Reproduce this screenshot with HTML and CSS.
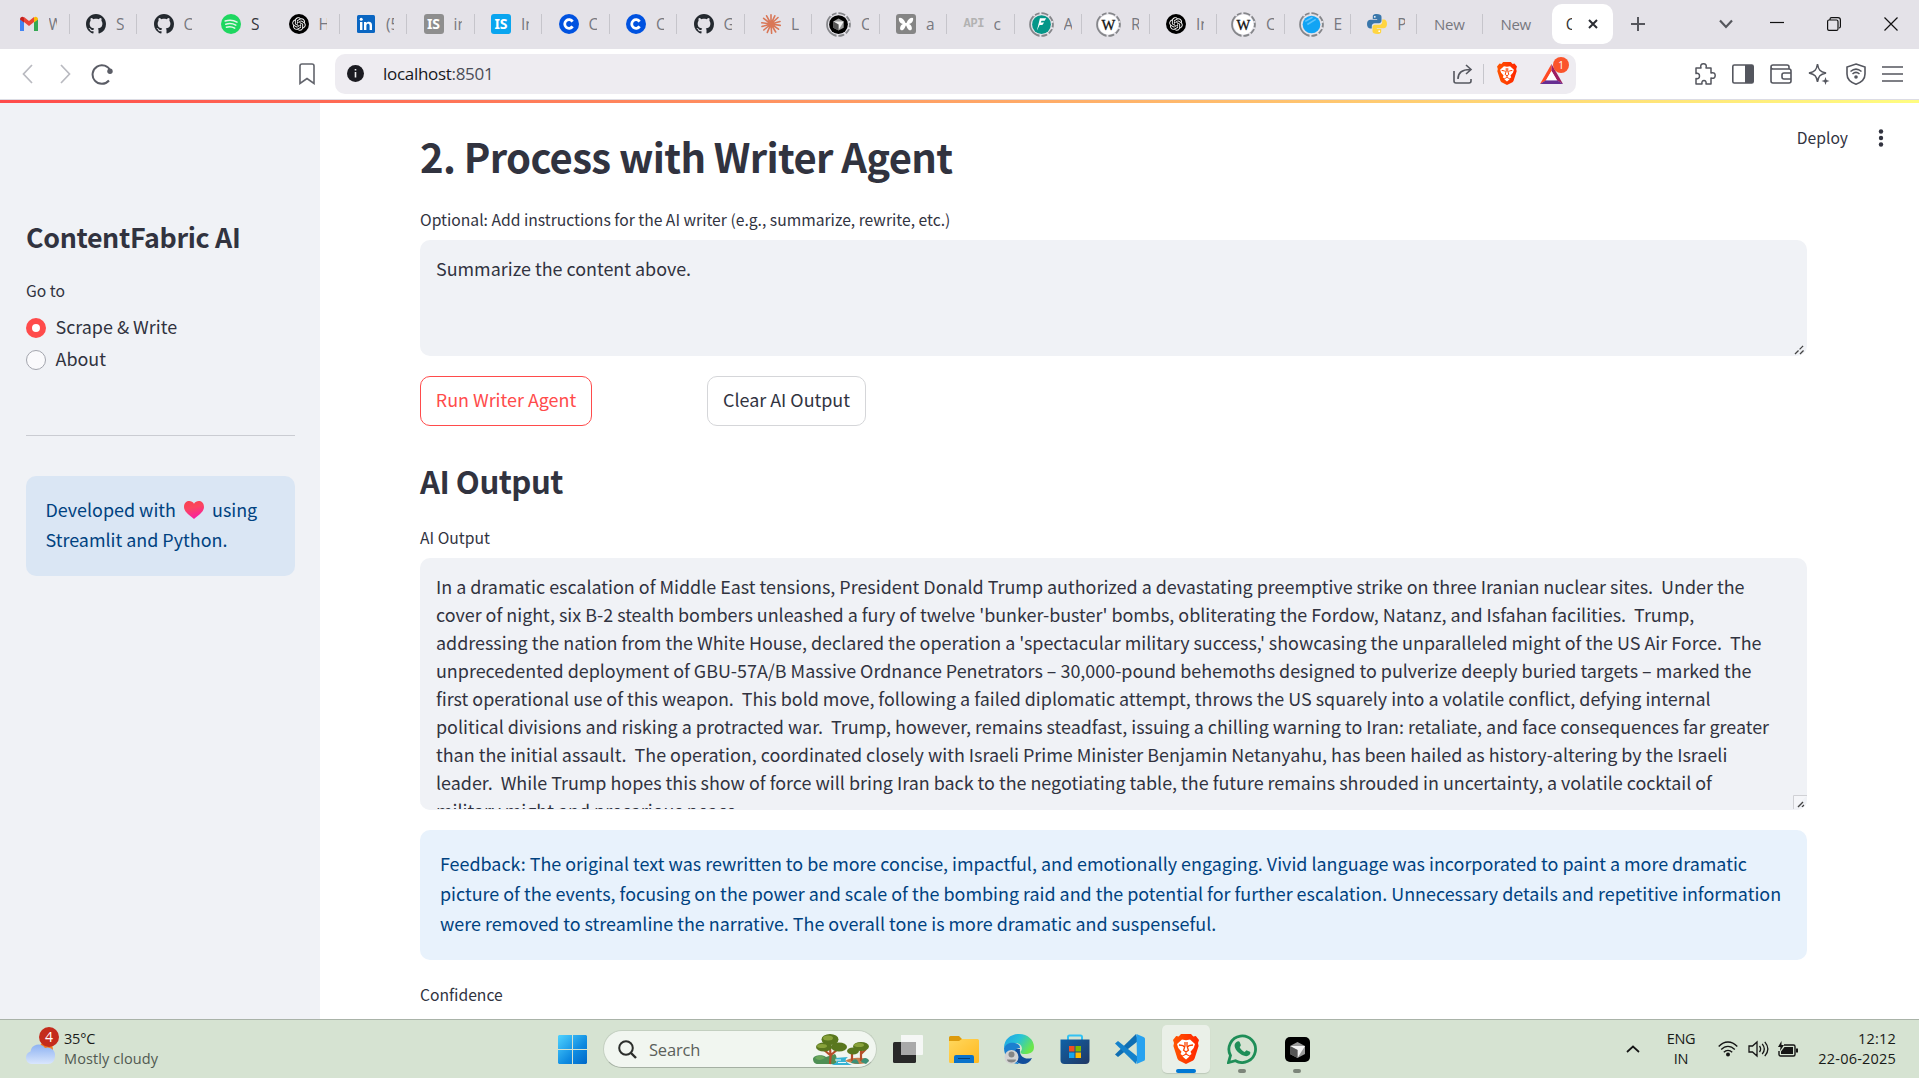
FILE: index.html
```html
<!DOCTYPE html>
<html lang="en">
<head>
<meta charset="utf-8">
<title>ContentFabric AI</title>
<link rel="stylesheet" href="styles.css">
</head>
<body>
<svg class="defs" aria-hidden="true">
  <defs>
    <linearGradient id="winG" x1="0" y1="0" x2="1" y2="1"><stop offset="0" stop-color="#4fd3ff"/><stop offset=".6" stop-color="#0e8ae0"/><stop offset="1" stop-color="#0067c8"/></linearGradient>
    <linearGradient id="cloudG" x1="0" y1="0" x2="0" y2="1"><stop offset="0" stop-color="#8db2f2"/><stop offset="1" stop-color="#d9e6fd"/></linearGradient>
    <linearGradient id="heartG" x1="0" y1="0" x2=".3" y2="1"><stop offset="0" stop-color="#f9414e"/><stop offset=".45" stop-color="#fb4660"/><stop offset="1" stop-color="#f9209f"/></linearGradient>
    <linearGradient id="braveG" x1="0" y1="0" x2="1" y2="0"><stop offset="0" stop-color="#ff5601"/><stop offset="1" stop-color="#ff2500"/></linearGradient>
    <linearGradient id="folderG" x1="0" y1="0" x2="1" y2="1"><stop offset="0" stop-color="#ffd75e"/><stop offset="1" stop-color="#ffb91f"/></linearGradient>
    <linearGradient id="edgeG" x1="0" y1="0" x2="1" y2=".5"><stop offset="0" stop-color="#1f9fe8"/><stop offset=".5" stop-color="#27c3d8"/><stop offset="1" stop-color="#6be64c"/></linearGradient>
    <linearGradient id="storeG" x1="0" y1="0" x2="1" y2="1"><stop offset="0" stop-color="#0f62a8"/><stop offset="1" stop-color="#213864"/></linearGradient>
    <symbol id="github" viewBox="0 0 16 16"><path fill="#24292f" d="M8 0C3.58 0 0 3.58 0 8c0 3.54 2.29 6.53 5.47 7.59.4.07.55-.17.55-.38 0-.19-.01-.82-.01-1.49-2.01.37-2.53-.49-2.69-.94-.09-.23-.48-.94-.82-1.13-.28-.15-.68-.52-.01-.53.63-.01 1.08.58 1.23.82.72 1.21 1.87.87 2.33.66.07-.52.28-.87.51-1.07-1.78-.2-3.64-.89-3.64-3.95 0-.87.31-1.59.82-2.15-.08-.2-.36-1.02.08-2.12 0 0 .67-.21 2.2.82.64-.18 1.32-.27 2-.27s1.36.09 2 .27c1.53-1.04 2.2-.82 2.2-.82.44 1.1.16 1.92.08 2.12.51.56.82 1.27.82 2.15 0 3.07-1.87 3.75-3.65 3.95.29.25.54.73.54 1.48 0 1.07-.01 1.93-.01 2.2 0 .21.15.46.55.38A8.01 8.01 0 0 0 16 8c0-4.42-3.58-8-8-8z"/></symbol>
    <symbol id="openai" viewBox="0 0 40 40"><circle cx="20" cy="20" r="20"/><path fill="#fff" transform="translate(6.500 6.500) scale(1.125)" d="M22.2819 9.8211a5.9847 5.9847 0 0 0-.5157-4.9108 6.0462 6.0462 0 0 0-6.5098-2.9A6.0651 6.0651 0 0 0 4.9807 4.1818a5.9847 5.9847 0 0 0-3.9977 2.9 6.0462 6.0462 0 0 0 .7427 7.0966 5.98 5.98 0 0 0 .511 4.9107 6.051 6.051 0 0 0 6.5146 2.9001A5.9847 5.9847 0 0 0 13.2599 24a6.0557 6.0557 0 0 0 5.7718-4.2058 5.9894 5.9894 0 0 0 3.9977-2.9001 6.0557 6.0557 0 0 0-.7475-7.0729zm-9.022 12.6081a4.4755 4.4755 0 0 1-2.8764-1.0408l.1419-.0804 4.7783-2.7582a.7948.7948 0 0 0 .3927-.6813v-6.7369l2.02 1.1686a.071.071 0 0 1 .038.052v5.5826a4.504 4.504 0 0 1-4.4945 4.4944zm-9.6607-4.1254a4.4708 4.4708 0 0 1-.5346-3.0137l.142.0852 4.783 2.7582a.7712.7712 0 0 0 .7806 0l5.8428-3.3685v2.3324a.0804.0804 0 0 1-.0332.0615L9.74 19.9502a4.4992 4.4992 0 0 1-6.1408-1.6464zM2.3408 7.8956a4.485 4.485 0 0 1 2.3655-1.9728V11.6a.7664.7664 0 0 0 .3879.6765l5.8144 3.3543-2.0201 1.1685a.0757.0757 0 0 1-.071 0l-4.8303-2.7865A4.504 4.504 0 0 1 2.3408 7.872zm16.5963 3.8558L13.1038 8.364 15.1192 7.2a.0757.0757 0 0 1 .071 0l4.8303 2.7913a4.4944 4.4944 0 0 1-.6765 8.1042v-5.6772a.79.79 0 0 0-.407-.667zm2.0107-3.0231l-.142-.0852-4.7735-2.7818a.7759.7759 0 0 0-.7854 0L9.409 9.2297V6.8974a.0662.0662 0 0 1 .0284-.0615l4.8303-2.7866a4.4992 4.4992 0 0 1 6.6802 4.66zM8.3065 12.863l-2.02-1.1638a.0804.0804 0 0 1-.038-.0567V6.0742a4.4992 4.4992 0 0 1 7.3757-3.4537l-.142.0805L8.704 5.459a.7948.7948 0 0 0-.3927.6813zm1.0976-2.3654l2.602-1.4998 2.6069 1.4998v2.9994l-2.5974 1.4997-2.6067-1.4997Z"/></symbol>
    <symbol id="coin" viewBox="0 0 20 20"><circle cx="10" cy="10" r="10" fill="#0052e0"/><path d="M13.6 7.6A4.3 4.3 0 1 0 13.6 12.4" fill="none" stroke="#fff" stroke-width="2.800"/></symbol>
    <symbol id="brave" viewBox="0 0 26 30"><path fill="url(#braveG)" d="M8 0h10l2.300 2.500 2.500-.4L26 6l-1 3 .6 3-4 12.500a4 4 0 0 1-1.500 2L13 30l-7.100-3.500a4 4 0 0 1-1.500-2L.4 12 1 9 0 6l3.200-3.900 2.500.4z"/><path fill="#fff" d="M9 5.500l4 .8 4-.8 5 4.500-1.300 4-3.200 3.700 1 2.300-2 1.500-2.500-1.500-1-.3-1 .3-2.500 1.500-2-1.500 1-2.300L5.300 14 4 10zM9.500 22.500L13 20.700l3.500 1.800L13 25.500z"/><path fill="none" stroke="#fb4300" stroke-width="1.300" d="M6 11l4 .7 1 1M20 11l-4 .7-1 1M12 8v4l-1.400 4.200L13 18l2.400-1.800L14 12V8M13 18v2"/></symbol>
    <symbol id="ring" viewBox="0 0 24 24"><circle cx="12" cy="12" r="11" fill="none" stroke="#85868a" stroke-width="1.700"/><path stroke="#e4e2e8" stroke-width="1.800" d="M11 2.800V0M18 5l1.800-2.500M20.500 10l3-.8M20.500 15l3 1M17 19.500l2 2.500M11 21v3M5.500 4L4 2"/></symbol>
    <symbol id="wikipedia" viewBox="0 0 24 24"><circle cx="12" cy="12" r="9.500" fill="#fff"/><text x="12" y="17" text-anchor="middle" font-family="Liberation Serif" font-size="14" fill="#111" stroke="#111" stroke-width=".3">W</text></symbol>
  </defs>
</svg>

<header class="tabstrip">
  <div class="tab"><svg class="fav" viewBox="0 0 20 20"><path fill="#4285f4" d="M1 17V5l4 3v9z"/><path fill="#34a853" d="M15 17V8l4-3v12z"/><path fill="#ea4335" d="M5 8V3l5 4 5-4v5l-5 4z"/><path fill="#c5221f" d="M1 5.500C1 3 3.500 2 5 3.500v5L1 5.500z"/><path fill="#fbbc04" d="M19 5.500C19 3 16.500 2 15 3.500v5l4-3z"/></svg><span>W</span></div>
  <div class="tab"><svg class="fav"><use href="#github"/></svg><span>S</span></div>
  <div class="tab plain"><svg class="fav"><use href="#github"/></svg><span>C</span></div>
  <div class="tab plain dark"><svg class="fav" viewBox="0 0 20 20"><circle cx="10" cy="10" r="10" fill="#1ed760"/><path d="M4.200 7c4-1.200 8.500-.8 11.800 1.200M4.800 10.200c3.500-1 7.200-.6 10 1M5.400 13.200c3-.7 6-.4 8.300 1" fill="none" stroke="#e4f5ea" stroke-width="1.500" stroke-linecap="round"/></svg><span>S</span></div>
  <div class="tab"><svg class="fav"><use href="#openai"/></svg><span>H</span></div>
  <div class="tab"><svg class="fav" viewBox="0 0 20 20"><rect x="1" y="1" width="18" height="18" rx="1.500" fill="#0a66c2"/><path fill="#fff" d="M4 8h2.400v8H4zM8 8h2.300v1.200C11.500 7.200 16 7.200 16 11v5h-2.400v-4.500c0-2.300-3.200-2.100-3.200 0V16H8z"/><circle cx="5.200" cy="5.300" r="1.500" fill="#fff"/></svg><span>(5</span></div>
  <div class="tab"><i class="fav is gray">IS</i><span>in</span></div>
  <div class="tab"><i class="fav is">IS</i><span>In</span></div>
  <div class="tab"><svg class="fav"><use href="#coin"/></svg><span>C</span></div>
  <div class="tab"><svg class="fav"><use href="#coin"/></svg><span>C</span></div>
  <div class="tab"><svg class="fav"><use href="#github"/></svg><span>G</span></div>
  <div class="tab"><svg class="fav" viewBox="0 0 20 20"><path stroke="#d97757" stroke-width="1.600" stroke-linecap="round" d="M10 10V.8M10 10l3.800-8.200M10 10l7-6.500M10 10l9-2.500M10 10l9.300 1.400M10 10l7.500 5.200M10 10l4.700 8M10 10l.6 9.300M10 10l-3.700 8.400M10 10l-7.200 6M10 10l-9 2.500M10 10L.8 8.700M10 10L2.600 4.300M10 10L5.600 1.800"/></svg><span>L</span></div>
  <div class="tab"><svg class="fav big" viewBox="0 0 24 24"><use href="#ring"/><circle cx="12" cy="12" r="9"/><path fill="#999" d="M7 9l5-2.800L17 9v6l-5 2.800L7 15z"/><path fill="#eee" d="M7 9h10l-5 8.500V12z"/><path fill="#555" d="M7 9l5 3v5.500L7 15z"/></svg><span>C</span></div>
  <div class="tab"><svg class="fav" viewBox="0 0 20 20"><rect width="20" height="20" rx="3" fill="#858585"/><path fill="#fff" d="M9.500 9C8 4 3 2.500 2.800 4.500 2.700 8 5 9.500 7 10c-3 1-4 6-1.500 6.300C8 16.500 9 13 10 11.200c1 1.800 2 5.300 4.500 5.100C17 16 16 11 13 10c2-.5 4.300-2 4.200-5.500C17 2.500 12 4 10.500 9z"/></svg><span>a</span></div>
  <div class="tab"><i class="fav api">API</i><span>c</span></div>
  <div class="tab"><svg class="fav big" viewBox="0 0 24 24"><use href="#ring"/><circle cx="12" cy="12" r="9" fill="#059688"/><path fill="#fff" d="M10.500 6h6l-1.500 2.500h-3L11.300 10h3.200l-1.700 2.500h-2.600L7.500 18z"/></svg><span>A</span></div>
  <div class="tab"><svg class="fav big" viewBox="0 0 24 24"><use href="#ring"/><use href="#wikipedia"/></svg><span>R</span></div>
  <div class="tab"><svg class="fav"><use href="#openai"/></svg><span>In</span></div>
  <div class="tab"><svg class="fav big" viewBox="0 0 24 24"><use href="#ring"/><use href="#wikipedia"/></svg><span>C</span></div>
  <div class="tab narrow"><svg class="fav big" viewBox="0 0 24 24"><use href="#ring"/><circle cx="12" cy="12" r="8.500" fill="#12a4f4"/><path d="M6 9l7-4M8 12l8-5" stroke="#5dc3fb" stroke-width="1.500"/></svg><span>E</span></div>
  <div class="tab narrow"><svg class="fav" viewBox="0 0 20 20"><path fill="#3a77ab" d="M9.800 0C6 0 5.800 1.500 5.800 2.700V5h4.400v.8H3.500C1.500 5.800 0 7.200 0 10s1.300 4.400 3 4.400h1.800v-2.300c0-1.600 1.400-2.900 3-2.900h4.300c1.300 0 2.400-1 2.400-2.400V2.700C14.500.8 12.500 0 9.800 0z"/><path fill="#ffd541" d="M10.200 20c3.800 0 4-1.500 4-2.700V15H9.800v-.8h6.700c2 0 3.500-1.400 3.500-4.200s-1.300-4.400-3-4.400h-1.800v2.300c0 1.600-1.400 2.900-3 2.900H7.900c-1.300 0-2.400 1-2.400 2.400v4.100c0 1.900 2 2.700 4.700 2.700z"/><circle cx="7.800" cy="2.800" r=".9" fill="#fff"/><circle cx="12.200" cy="17.200" r=".9" fill="#fff"/></svg><span>P</span></div>
  <div class="tab narrow text"><span>New T</span></div>
  <div class="tab narrow text plain"><span>New T</span></div>
  <div class="tab active"><span>C</span><svg width="12" height="12" viewBox="0 0 12 12"><path d="M2 2l8 8M10 2l-8 8" stroke="#2b2d33" stroke-width="2"/></svg></div>
  <svg class="plus" width="14" height="14" viewBox="0 0 14 14"><path d="M7 0v14M0 7h14" stroke="#55565c" stroke-width="2"/></svg>
  <div class="winctl">
    <svg width="14" height="10" viewBox="0 0 14 10"><path d="M1 1.500l6 6.500 6-6.500" fill="none" stroke="#55565c" stroke-width="2.200"/></svg>
    <svg width="14" height="14" viewBox="0 0 14 14"><path d="M0 5.500h14" stroke="#111" stroke-width="1.200"/></svg>
    <svg width="14" height="14" viewBox="0 0 14 14"><path d="M3 2.500V2A1.500 1.500 0 0 1 4.500.6H11A2.400 2.400 0 0 1 13.400 3v6.500A1.500 1.500 0 0 1 12 11M.6 4.500A1.500 1.500 0 0 1 2 3h7.500A1.500 1.500 0 0 1 11 4.500V12a1.500 1.500 0 0 1-1.500 1.400H2A1.500 1.500 0 0 1 .6 12z" fill="none" stroke="#111" stroke-width="1.200"/></svg>
    <svg width="14" height="14" viewBox="0 0 14 14"><path d="M.5.5l13 13M13.500.5l-13 13" stroke="#111" stroke-width="1.200"/></svg>
  </div>
</header>

<nav class="toolbar">
  <div class="navicons">
    <svg width="11" height="20" viewBox="0 0 11 20"><path d="M10 1L1.500 10l8.500 9" fill="none" stroke="#b9bac0" stroke-width="1.700"/></svg>
    <svg width="11" height="20" viewBox="0 0 11 20"><path d="M1 1l8.500 9L1 19" fill="none" stroke="#b9bac0" stroke-width="1.700"/></svg>
    <svg width="22" height="22" viewBox="0 0 22 22"><path d="M18 17.500A9.300 9.300 0 1 1 19.500 8" fill="none" stroke="#5b5d66" stroke-width="2"/><circle cx="19" cy="8.300" r="2.700" fill="#5b5d66"/></svg>
  </div>
  <svg class="bookmark" width="16" height="22" viewBox="0 0 16 22"><path d="M3 1h10a2 2 0 0 1 2 2v17.500l-7-5-7 5V3a2 2 0 0 1 2-2z" fill="none" stroke="#62646c" stroke-width="1.600"/></svg>
  <div class="urlbar">
    <svg width="17" height="17" viewBox="0 0 17 17"><circle cx="8.500" cy="8.500" r="8.500" fill="#1b1b21"/><path d="M8.500 7v5.500M8.500 4v1.600" stroke="#eee" stroke-width="1.600"/></svg>
    <span class="url">localhost<b>:8501</b></span>
    <svg width="20" height="20" viewBox="0 0 20 20"><path d="M1 7v10a2 2 0 0 0 2 2h13a2 2 0 0 0 2-2v-2M5 15c0-6 3-9.500 12-9.500M13 1l5 4.500-5 4.500" fill="none" stroke="#55575f" stroke-width="1.600"/></svg>
    <i class="vsep"></i>
    <svg class="lion" width="20" height="23"><use href="#brave"/></svg>
    <span class="bat"><svg width="23" height="20" viewBox="0 0 23 20"><path fill="#ff4a24" d="M11.500 0L0 20l6-3.500 5.500-9.500z"/><path fill="#9e1f63" d="M11.500 0L23 20l-6-3.500L11.500 7z"/><path fill="#662d91" d="M0 20h23l-6-3.800H6z"/><path fill="#fff" d="M11.500 7l5.500 9.300H6z"/></svg><b>1</b></span>
  </div>
  <div class="extras">
    <svg width="22" height="22" viewBox="0 0 22 22"><path d="M2 5h5c-1-3 .5-4.200 2.500-4.200S13 2 12 5h5v5c3-.8 4.200.5 4.200 2.500S20 16 17 15v6h-5c.5-2.500-.5-3.500-2-3.500S7.500 18.500 8 21H2v-5.500c2.500.5 3.500-.5 3.500-2.500S4.500 10 2 10.500z" fill="none" stroke="#54565e" stroke-width="1.500" stroke-linejoin="round"/></svg>
    <svg width="22" height="20" viewBox="0 0 22 20"><rect x=".8" y="1" width="20.400" height="18" rx="1.500" fill="none" stroke="#54565e" stroke-width="1.600"/><path fill="#54565e" d="M13 1h8v18h-8z"/></svg>
    <svg width="22" height="20" viewBox="0 0 22 20"><path d="M19 5V3a2 2 0 0 0-2-2H3a2 2 0 0 0 0 4h16a2 2 0 0 1 2 2v10a2 2 0 0 1-2 2H3a2 2 0 0 1-2-2V3M21 9h-7a2 2 0 0 0-2 2v2a2 2 0 0 0 2 2h7" fill="none" stroke="#54565e" stroke-width="1.600"/></svg>
    <svg width="22" height="22" viewBox="0 0 22 22"><path d="M9.500 1c1 6 2.500 7.500 8.500 9-6 1.500-7.500 3-8.500 9-1-6-2.500-7.500-8.500-9 6-1.500 7.500-3 8.500-9z" fill="none" stroke="#54565e" stroke-width="1.500"/><path d="M17.500 14l1 3 3 1-3 1-1 3-1-3-3-1 3-1z" fill="#54565e"/></svg>
    <svg width="20" height="22" viewBox="0 0 20 22"><path d="M10 1l9 3v7c0 5-4 8.500-9 10.200C5 19.500 1 16 1 11V4z" fill="none" stroke="#54565e" stroke-width="1.600"/><path d="M4.500 8.500c3.500-3 7.500-3 11 0M6.500 11c2.200-2 4.800-2 7 0" fill="none" stroke="#54565e" stroke-width="1.500"/><circle cx="10" cy="14" r="1.800" fill="#54565e"/></svg>
    <svg width="21" height="16" viewBox="0 0 21 16"><path d="M0 1h21M0 8h21M0 15h21" stroke="#54565e" stroke-width="1.600"/></svg>
  </div>
</nav>
<div class="rainbow"></div>

<div class="app">
  <aside class="sidebar">
    <h2>ContentFabric AI</h2>
    <p class="label">Go to</p>
    <div class="radios">
      <label><i class="radio on"></i><span>Scrape &amp; Write</span></label>
      <label><i class="radio"></i><span>About</span></label>
    </div>
    <hr>
    <div class="note">Developed with <svg class="heart" width="20" height="18" viewBox="0 0 20 18"><path fill="url(#heartG)" d="M10 2.800C7.500-1.500 0-.8 0 6c0 5 6 8.500 10 12 4-3.500 10-7 10-12 0-6.800-7.500-7.500-10-3.200z"/></svg> using<br>Streamlit and Python.</div>
  </aside>
  <main class="main">
    <div class="column">
      <h1>2. Process with Writer Agent</h1>
      <p class="label l1">Optional: Add instructions for the AI writer (e.g., summarize, rewrite, etc.)</p>
      <div class="area small">Summarize the content above.<svg class="grip" width="11" height="11" viewBox="0 0 11 11"><path d="M1 10l9-9M6 10l4-4" stroke="#444" stroke-width="1.300" stroke-dasharray="5 1.500"/></svg></div>
      <div class="buttons"><button class="run">Run Writer Agent</button><button class="clear">Clear AI Output</button></div>
      <h3>AI Output</h3>
      <p class="label l2">AI Output</p>
      <div class="area tall">In a dramatic escalation of Middle East tensions, President Donald Trump authorized a devastating preemptive strike on three Iranian nuclear sites.  Under the
cover of night, six B-2 stealth bombers unleashed a fury of twelve 'bunker-buster' bombs, obliterating the Fordow, Natanz, and Isfahan facilities.  Trump,
addressing the nation from the White House, declared the operation a 'spectacular military success,' showcasing the unparalleled might of the US Air Force.  The
unprecedented deployment of GBU-57A/B Massive Ordnance Penetrators – 30,000-pound behemoths designed to pulverize deeply buried targets – marked the
first operational use of this weapon.  This bold move, following a failed diplomatic attempt, throws the US squarely into a volatile conflict, defying internal
political divisions and risking a protracted war.  Trump, however, remains steadfast, issuing a chilling warning to Iran: retaliate, and face consequences far greater
than the initial assault.  The operation, coordinated closely with Israeli Prime Minister Benjamin Netanyahu, has been hailed as history-altering by the Israeli
leader.  While Trump hopes this show of force will bring Iran back to the negotiating table, the future remains shrouded in uncertainty, a volatile cocktail of
military might and precarious peace.<svg class="corner" width="14" height="14" viewBox="0 0 14 14"><path d="M.5 14V.5H14" fill="#f5f6f9" stroke="#d0d1d5"/><path d="M5 12l5-5M9 12l2-2" stroke="#444" stroke-width="1.400"/></svg></div>
      <div class="feedback">Feedback: The original text was rewritten to be more concise, impactful, and emotionally engaging. Vivid language was incorporated to paint a more dramatic
picture of the events, focusing on the power and scale of the bombing raid and the potential for further escalation. Unnecessary details and repetitive information
were removed to streamline the narrative. The overall tone is more dramatic and suspenseful.</div>
      <p class="label l3">Confidence</p>
    </div>
    <div class="deploy"><span>Deploy</span><svg width="6" height="18" viewBox="0 0 6 18"><g fill="#31333f"><circle cx="3" cy="2.500" r="2.200"/><circle cx="3" cy="9" r="2.200"/><circle cx="3" cy="15.500" r="2.200"/></g></svg></div>
  </main>
</div>

<footer class="taskbar">
  <div class="weather">
    <span class="wicon"><svg width="30" height="22" viewBox="0 0 30 22"><circle cx="21" cy="7" r="7" fill="#f47a20"/><path fill="url(#cloudG)" d="M6 22a6.500 6.500 0 0 1-.5-12.500A8 8 0 0 1 20 6a7.500 7.500 0 0 1 10 8c0 5-3 8-7 8z"/></svg><b>4</b></span>
    <span class="wtext"><span>35°C</span><small>Mostly cloudy</small></span>
  </div>
  <div class="apps">
    <svg class="start" width="29" height="29" viewBox="0 0 29 29"><path fill="url(#winG)" d="M1 0h13v14H0V1zM15 0h13l1 1v13H15zM0 15h14v14H1l-1-1zM15 15h14v13l-1 1H15z"/></svg>
    <div class="search">
      <svg width="19" height="19" viewBox="0 0 19 19"><circle cx="8" cy="8" r="6.800" fill="none" stroke="#2b2e2b" stroke-width="2"/><path d="M13 13l5 5" stroke="#2b2e2b" stroke-width="2.400"/></svg>
      <span>Search</span>
      <svg class="trees" width="56" height="31" viewBox="0 0 56 31"><path fill="#4f8f55" d="M0 25c0-4 10-5 13-2l9-3c3 3 1 10 1 10H5c-3 0-5-2-5-5z"/><path fill="#6ba85a" d="M2 24c2-3 8-3 10 0-3 2-7 3-10 0z"/><path fill="#36b3d3" d="M18 31c7-2 7-5 4-7l13-1c-4 3-3 5 4 8z"/><path d="M22 26h6M25 28.500h8" stroke="#e7f8fc"/><path fill="#c97c49" d="M32 27c6-4 18-4 24-1-1 4-8 4-14 4z"/><path fill="none" stroke="#b54e29" stroke-width="2.200" d="M17 30c1-7 1-10 0-16M18 21l8-7M17 21l-7-6M39 27V17M48 27V15M48 20l5-5"/><g fill="#59771e"><ellipse cx="17" cy="5.500" rx="8.500" ry="5.500"/><ellipse cx="11" cy="13" rx="8" ry="4.500"/><ellipse cx="26" cy="13" rx="8" ry="4.500"/><ellipse cx="48" cy="12.500" rx="8" ry="4.500"/><ellipse cx="40" cy="17" rx="6" ry="3.500"/></g><g fill="#88a23a"><ellipse cx="15" cy="4" rx="5" ry="2.500"/><ellipse cx="9" cy="12" rx="5" ry="2"/><ellipse cx="46" cy="11" rx="5" ry="2"/></g><path fill="#3b9077" d="M38 29c3-6 7-4 8 1M48 28c2-6 7-4 8-1l-3 3z"/></svg>
    </div>
    <div class="app-icon"><svg width="30" height="28" viewBox="0 0 30 28"><rect y="7" width="23" height="21" rx="1.500" fill="#292929"/><path d="M8 0h21a1 1 0 0 1 1 1v18a1 1 0 0 1-1 1H8z" fill="#f8f8f8" opacity=".9"/><path d="M8 7h15v13H8z" fill="#a9a9a9"/></svg></div>
    <div class="app-icon"><svg width="30" height="27" viewBox="0 0 30 27"><path fill="#dd9b0d" d="M0 1.500A1.500 1.500 0 0 1 1.500 0H10l3 3v5H0z"/><path fill="url(#folderG)" d="M0 5h10l3-2h15.500A1.500 1.500 0 0 1 30 4.500v21a1.500 1.500 0 0 1-1.500 1.500h-27A1.500 1.500 0 0 1 0 25.500z"/><path fill="#0a73cb" d="M7 19h16a2 2 0 0 1 2 2v6H5v-6a2 2 0 0 1 2-2z"/><path stroke="#053f75" d="M9 22.500h12"/></svg></div>
    <div class="app-icon"><svg width="30" height="30" viewBox="0 0 30 30"><path fill="#124e9b" d="M8 14c-2 8 3 16 11 16 4 0 7-2 9-6-8 2-13-2-12-9z"/><path fill="url(#edgeG)" d="M0 14C0 5 7 0 15 0c9 0 15 6 15 13 0 6-5 7-9 7-5 0-5-2-4-3 2-2 1-8-6-8-6 0-10 3-11 5z"/><path fill="#1b80d0" d="M0 14c2-5 7-6 11-5 4 1 5 3 5 5-5-1-6 5-5 10 1 4 4 6 4 6C6 30 0 22 0 14z"/><circle cx="7.500" cy="23" r="7" fill="#d2d2d2"/><circle cx="7.500" cy="20.500" r="3" fill="#858585"/><path fill="#858585" d="M3 25.500h9c0 4-9 4-9 0z"/></svg></div>
    <div class="app-icon"><svg width="30" height="30" viewBox="0 0 30 30"><path d="M8 6V3a1.500 1.500 0 0 1 1.500-1.500h11A1.500 1.500 0 0 1 22 3v3" fill="none" stroke="#33c2f3" stroke-width="2"/><path fill="url(#storeG)" d="M.5 5.500h29V26a4 4 0 0 1-4 4h-21a4 4 0 0 1-4-4z"/><path fill="#f25022" d="M9 12h5.500v5.500H9z"/><path fill="#7fba00" d="M15.500 12H21v5.500h-5.500z"/><path fill="#13a5ef" d="M9 18.500h5.500V24H9z"/><path fill="#ffb900" d="M15.500 18.500H21V24h-5.500z"/></svg></div>
    <div class="app-icon"><svg width="30" height="30" viewBox="0 0 30 30"><path fill="#0f6eb3" d="M0 20.500L21 0l2 7L3 23z"/><path fill="#1481cb" d="M0 9.500L3 7l20 16-2 7z"/><path fill="#27a2f0" d="M21.500 0l7 3a2 2 0 0 1 1.500 2v20a2 2 0 0 1-1.500 2l-7 3 .5-2z"/></svg></div>
    <div class="app-icon current"><svg width="26" height="30"><use href="#brave"/></svg></div>
    <div class="app-icon open"><svg width="30" height="30" viewBox="0 0 30 30"><path d="M1.500 28.500l2-7A13.300 13.300 0 1 1 8.500 26.700z" fill="none" stroke="#1f8e58" stroke-width="2.800"/><path fill="#1f8e58" d="M10.500 7.500c1-.4 2 0 2.300.8l1 2.600c.2.700-.9 1.800-1.200 2.200 1.200 2.500 2.800 4 5.200 5 .5-.5 1.400-2 2.200-1.700l3 1.400c.7.500.2 2.200-.5 3-2 2-4.500 1.500-7.500.2-4-2-7.500-6-7.400-9.700 0-1.800 1.500-3.200 2.900-3.800z"/></svg></div>
    <div class="app-icon open"><svg width="25" height="25" viewBox="0 0 25 25"><rect width="25" height="25" rx="5"/><path fill="#999" d="M5 9l7.500-4L20 9v8l-7.500 4L5 17z"/><path fill="#f2f2f2" d="M5 9h15l-7.500 12v-8z"/><path fill="#555" d="M5 9l7.500 4v8L5 17z"/></svg></div>
  </div>
  <div class="tray">
    <svg class="up" width="14" height="8" viewBox="0 0 14 8"><path d="M1 7l6-5.500L13 7" fill="none" stroke="#151515" stroke-width="1.700"/></svg>
    <span class="lang">ENG<br>IN</span>
    <svg width="20" height="16" viewBox="0 0 20 16"><g fill="none" stroke="#151515" stroke-width="1.300"><path d="M.7 5.500c5.500-6 13-6 18.600 0M3.200 8.500c4-4.300 9.500-4.300 13.600 0M5.800 11.300c2.500-2.600 5.900-2.600 8.400 0"/></g><circle cx="10" cy="13.500" r="2" fill="#151515"/></svg>
    <svg width="21" height="18" viewBox="0 0 21 18"><path d="M1 6h3.500L9 2v14l-4.500-4H1zM11.500 6c1.500 2 1.500 4 0 6M14.200 3.800c2.800 3.500 2.800 7 0 10.400M16.800 1.800c4 4.700 4 9.700 0 14.400" fill="none" stroke="#151515" stroke-width="1.300"/></svg>
    <svg class="battery" width="20" height="17" viewBox="0 0 20 17"><path d="M6 4h9.500A1.500 1.500 0 0 1 17 5.500v8a1.500 1.500 0 0 1-1.500 1.500h-13A1.500 1.500 0 0 1 1 13.500V10" fill="none" stroke="#151515" stroke-width="1.400"/><path fill="#151515" d="M6.500 6H15v7H3v-2.500zM18 7.500h2v4h-2zM3.500 0L0 6h2.500L2 10l4-6H3.500z"/></svg>
    <span class="clock">12:12<br>22-06-2025</span>
  </div>
</footer>
</body>
</html>
```
FILE: styles.css
```css
* { box-sizing: border-box; }
body {
  margin: 0;
  width: 1919px;
  height: 1078px;
  overflow: hidden;
  display: flex;
  flex-direction: column;
  font-family: "Noto Sans CJK JP", "Noto Sans", sans-serif;
  font-size: 17.910px;
  color: #31333f;
  background: #fff;
}
h1, h2, h3, p { margin: 0; }
svg { display: block; flex: none; }
.defs { position: absolute; width: 0; height: 0; }

/* Tab strip */
.tabstrip {
  flex: none;
  height: 49px;
  background: #e4e2e8;
  display: flex;
  align-items: center;
  padding: 0 0 1px 2px;
  font: 15.500px "Open Sans", sans-serif;
  color: #77787f;
}
.tab {
  flex: none;
  width: 67.500px;
  height: 20px;
  border-right: 1px solid #c6c5cb;
  display: flex;
  align-items: center;
  padding-left: 16.500px;
}
.tab.plain { border-color: transparent; }
.tab.dark { color: #33343a; }
.tab.narrow { width: 66.300px; }
.tab.text { padding-left: 17px; }
.tab span {
  width: 8px;
  margin-left: 10px;
  overflow: hidden;
  white-space: nowrap;
  line-height: 20px;
}
.tab.text span { width: 34px; margin: 0; font-size: 15px; letter-spacing: -.3px; }
.fav { width: 20px; height: 20px; }
.fav.big { width: 25px; height: 25px; margin: 0 -2.500px; }
.fav.big + span { margin-left: 12.500px; }
.fav.is, .fav.api {
  font: bold 14px/20px "Noto Sans", sans-serif;
  text-align: center;
  color: #fff;
  background: #0aa5ef;
  border-radius: 3px;
  flex: none;
}
.fav.gray { background: #8e8e8e; }
.fav.api { background: none; color: #b2b2b2; font: bold 12px/20px "Liberation Mono", monospace; letter-spacing: -.3px; }
.tab.active {
  width: 61px;
  height: 40px;
  margin-left: 2px;
  border: 0;
  border-radius: 10px;
  background: #fff;
  padding-left: 14px;
  gap: 15px;
}
.tab.active span { width: 6px; margin: 0; color: #333; }
.plus { margin-left: 18px; }
.winctl { margin-left: auto; padding-right: 21px; display: flex; align-items: center; gap: 43px; }
.winctl svg:first-child { margin-right: -6px; }

/* Toolbar */
.toolbar {
  flex: none;
  height: 51px;
  display: flex;
  align-items: center;
  border-bottom: 1px solid #dcdce4;
  padding: 0 16px 1px 22px;
}
.navicons { display: flex; align-items: center; gap: 26.500px; width: 276.500px; }
.navicons svg:last-child { margin-left: -6px; }
.urlbar {
  width: 1241px;
  height: 40px;
  margin: 0 0 0 20.500px;
  border-radius: 10px;
  background: #eeecf1;
  display: flex;
  align-items: center;
  padding: 0 13px 0 12px;
}
.url { margin-left: 19px; flex: 1; font: 17px "Open Sans", sans-serif; letter-spacing: -.3px; color: #17181c; }
.url b { font-weight: 400; color: #4b4d57; }
.vsep { width: 1px; height: 20px; background: #c6c6cc; margin: 0 13px 0 10px; }
.bat { position: relative; margin-left: 23px; }
.bat b {
  position: absolute;
  left: 13px;
  top: -7px;
  width: 16px;
  height: 16px;
  border-radius: 50%;
  background: #fb542b;
  color: #fff;
  font: 10px/16px "Open Sans", sans-serif;
  text-align: center;
}
.extras { margin-left: auto; display: flex; align-items: center; gap: 16.100px; }
.rainbow { flex: none; height: 3px; background: linear-gradient(90deg, #ff4b4b, #fffd80); }

/* Page */
.app { flex: none; height: 916px; display: flex; overflow: hidden; }
.sidebar { flex: none; width: 320px; background: #f0f2f6; padding: 116px 25px 0 26px; }
.sidebar h2 { font-size: 26.800px; line-height: 36px; letter-spacing: -.35px; white-space: nowrap; }
.label { font-size: 15.680px; line-height: 28px; }
.sidebar .label { margin-top: 22px; }
.radios { margin-top: 7px; }
.radios label { display: flex; align-items: center; height: 32px; gap: 9.500px; }
.radios span { padding-bottom: 4px; }
.radio { width: 20px; height: 20px; border-radius: 50%; background: #fafafc; border: 1px solid #a3a5ad; }
.radio.on { background: #fff; border: 6.500px solid #ff4b4b; }
.sidebar hr { height: 1px; border: 0; background: #caccd2; margin: 59px 0 40px; }
.note { height: 100px; border-radius: 10px; background: #dae6f4; color: #004280; padding: 18px 19.500px; line-height: 30px; }
.heart { display: inline-block; vertical-align: -2px; margin: 0 4px; }
.main { flex: 1; display: flex; justify-content: space-between; padding-right: 35px; }
.column { flex: none; width: 1387px; margin-left: 100px; padding-top: 26px; }
h1 { font-size: 40px; line-height: 54px; letter-spacing: -.66px; }
h3 { font-size: 31.200px; line-height: 42px; margin-top: 34px; letter-spacing: -.5px; }
.l1 { margin: 23px 0 6px; }
.l2 { margin: 22px 0 6px; }
.l3 { margin-top: 21px; }
.area {
  position: relative;
  background: #f0f2f6;
  border-radius: 10px;
  padding: 14px 16px 0;
  line-height: 28px;
  white-space: pre;
  overflow: hidden;
}
.area.small { height: 116px; }
.area.tall { height: 252px; border-bottom: 1px solid #f0f2f6; }
.grip { position: absolute; right: 2px; bottom: 1px; }
.corner { position: absolute; right: 0; bottom: 0; }
.buttons { display: flex; gap: 115px; margin-top: 20px; }
.buttons button {
  height: 50px;
  width: 172px;
  padding: 0 0 4px;
  border: 1px solid #d5d6d9;
  border-radius: 10px;
  background: #fff;
  font: inherit;
  color: inherit;
  white-space: nowrap;
}
.buttons .run { border-color: #ff4b4b; color: #ff4b4b; }
.buttons .clear { width: 159px; }
.feedback {
  margin-top: 20px;
  height: 130px;
  border-radius: 10px;
  background: #e8f2fc;
  color: #004280;
  padding: 18px 20px;
  line-height: 30px;
  white-space: pre;
}
/* The header actions reach a little over the right edge of the content column */
.deploy { flex: none; display: flex; align-items: center; gap: 30px; height: 28px; margin: 20px 0 0 -40px; font-size: 15.680px; }
.deploy svg { margin-top: 1px; }

/* Taskbar */
.taskbar {
  flex: none;
  height: 59px;
  border-top: 1px solid #a9b3a8;
  background: #d6e3d2;
  display: flex;
  align-items: center;
  font-family: "Open Sans", sans-serif;
  font-size: 14.500px;
  color: #181a18;
}
.weather { flex: none; width: 558px; display: flex; padding-left: 25px; gap: 9px; align-items: center; }
.wicon { position: relative; padding-top: 7px; }
.wicon b {
  position: absolute;
  left: 14px;
  top: -8px;
  width: 20px;
  height: 20px;
  border-radius: 50%;
  background: #c42b1c;
  color: #fff;
  font: 14px/20px "Open Sans", sans-serif;
  text-align: center;
}
.wtext { display: flex; flex-direction: column; line-height: 20.500px; letter-spacing: -.2px; }
.wtext small { font-size: 14.500px; color: #515951; letter-spacing: .1px; }
.apps { flex: none; display: flex; align-items: center; }
.search {
  flex: none;
  width: 274px;
  height: 38px;
  margin: 0 7px 0 16px;
  border-radius: 19px;
  background: #f1f6f0;
  border: 1px solid #c3cfc0;
  border-bottom-color: #a5b0a3;
  display: flex;
  align-items: center;
  padding: 0 7px 0 14px;
  font-size: 16.500px;
  color: #5b605b;
}
.search span { flex: 1; margin-left: 12px; letter-spacing: -.2px; }
.app-icon { position: relative; width: 48px; height: 48px; margin-right: 7.600px; display: grid; place-items: center; border-radius: 5px; }
.app-icon.current { background: #eaf0e8; box-shadow: 0 1px 1px #bdc9ba; }
.app-icon.current::after, .app-icon.open::after {
  content: "";
  position: absolute;
  bottom: 0;
  left: 20px;
  width: 8px;
  height: 4px;
  border-radius: 2px;
  background: #7c857a;
}
.app-icon.current::after { left: 14px; width: 20px; background: #0078d4; }
.tray { margin-left: auto; padding-right: 23px; display: flex; align-items: center; line-height: 20px; }
.lang { width: 40px; text-align: center; margin: 0 17px 0 21px; letter-spacing: -.3px; }
.tray svg { margin-right: 9.500px; }
.tray .up { margin-right: 0; }
.tray .battery { margin-right: 0; }
.clock { width: 98px; text-align: right; letter-spacing: .2px; white-space: nowrap; }
```
